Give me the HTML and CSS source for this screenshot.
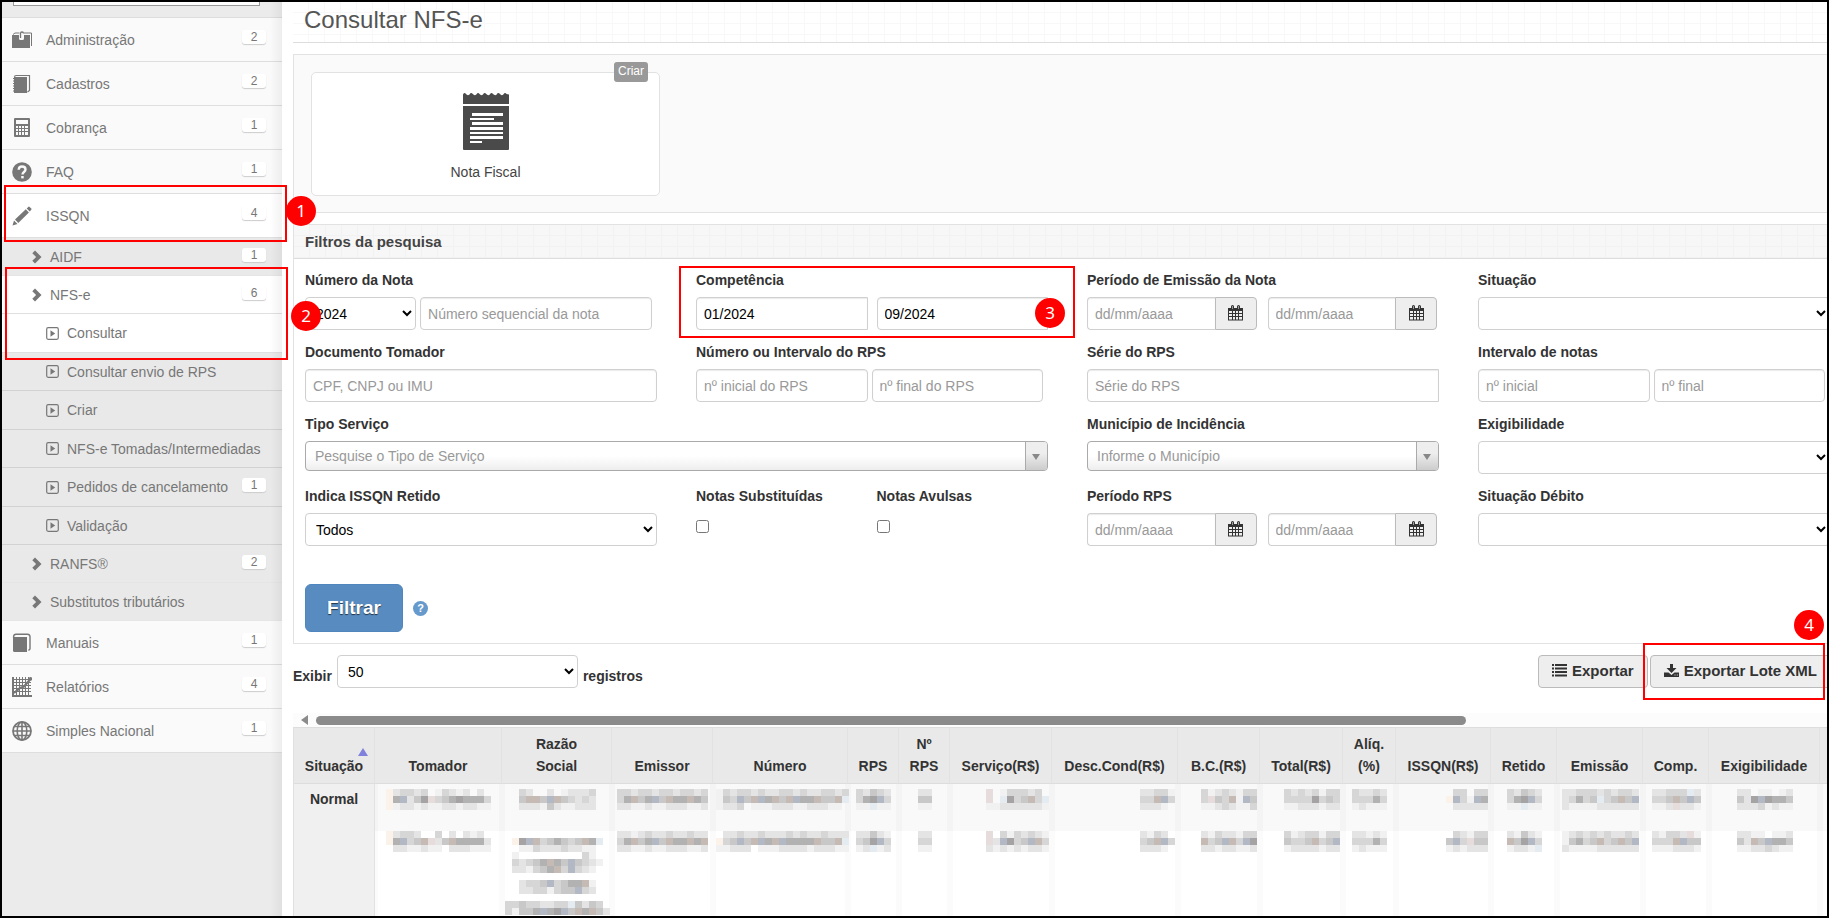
FILE: index.html
```html
<!DOCTYPE html>
<html lang="pt-BR">
<head>
    <meta charset="UTF-8">
    <meta name="viewport" content="width=device-width, initial-scale=1.0">
    <title>Consultar NFS-e</title>
    <link rel="stylesheet" href="styles.css">
</head>
<body>
    <!-- Ícones reutilizados -->
    <svg class="sprite" aria-hidden="true">
        <symbol id="i-chevron" viewBox="0 0 10 14"><path d="M3 0.5L9.500 7L3 13.500L0.300 10.800L4.100 7L0.300 3.200Z" fill="#777"/></symbol>
        <symbol id="i-play" viewBox="0 0 13 13"><rect x="0.700" y="0.700" width="11.600" height="11.600" rx="1.500" fill="none" stroke="#777" stroke-width="1.200"/><path d="M4.500 3.300L9.200 6.500L4.500 9.700Z" fill="#777"/></symbol>
        <symbol id="i-calendar" viewBox="0 0 15 16"><path d="M0 3h3V1.500a1.500 1.500 0 0 1 3 0V3h3V1.500a1.500 1.500 0 0 1 3 0V3h3v12.500H0z" fill="#333"/><path d="M1 6h3v2H1zM5 6h2v2H5zM8 6h2v2H8zM11 6h3v2h-3zM1 9h3v2H1zM5 9h2v2H5zM8 9h2v2H8zM11 9h3v2h-3zM1 12h3v2.500H1zM5 12h2v2.500H5zM8 12h2v2.500H8zM11 12h3v2.500h-3z" fill="#eee"/><path d="M4.500 1v3M10.500 1v3" stroke="#999" stroke-width="1"/></symbol>
    </svg>

    <div class="app">
        <nav class="sidebar">
            <div class="sidebar-search"><input type="text" aria-label="Buscar no menu"></div>
            <ul class="menu">
                <li><a class="item" href="#">
                    <svg class="icon" viewBox="0 0 20 20"><path d="M0 5h7v3.500a1.500 1.500 0 0 0 1.500 1.500h2A1.500 1.500 0 0 0 12 8.500V5h6v13H0z" fill="#777"/><path d="M1 4.500L3 3h4.500M12 3h7.500v13" fill="none" stroke="#777"/><path d="M8.500 8V3.500a1.500 1.500 0 0 1 3 0" fill="none" stroke="#777" stroke-width="1.300"/></svg>
                    <span>Administração</span><b class="count">2</b></a></li>
                <li><a class="item" href="#">
                    <svg class="icon" viewBox="0 0 20 20"><path d="M2 3h13v16H2z" fill="#777"/><path d="M2 2.500L4 1.500h13.500v15L15.500 18" fill="none" stroke="#777" stroke-width="1.200"/><path d="M1 4.500h2M1 7h2M1 9.500h2M1 12h2M1 14.500h2M1 17h2" stroke="#777"/></svg>
                    <span>Cadastros</span><b class="count">2</b></a></li>
                <li><a class="item" href="#">
                    <svg class="icon" viewBox="0 0 20 20"><path fill-rule="evenodd" d="M3 0h14a1 1 0 0 1 1 1v17a1 1 0 0 1-1 1H3a1 1 0 0 1-1-1V1a1 1 0 0 1 1-1zM4 2v4h12V2zM4 8v2h2V8zM7 8v2h2V8zM10 8v2h2V8zM13 8v2h3V8zM4 11v2h2v-2zM7 11v2h2v-2zM10 11v2h2v-2zM13 11v2h3v-2zM4 14v3h2v-3zM7 14v3h2v-3zM10 14v3h2v-3zM13 14v3h3v-3z" fill="#777"/></svg>
                    <span>Cobrança</span><b class="count">1</b></a></li>
                <li><a class="item" href="#">
                    <svg class="icon" viewBox="0 0 20 20"><circle cx="10" cy="10" r="9.800" fill="#777"/><path d="M6.700 7.800C6.800 5.500 8 4.500 10 4.500c2.200 0 3.500 1.300 3.500 3 0 2.500-3 2.500-3 5" fill="none" stroke="#fafafa" stroke-width="2.400"/><rect x="9.200" y="14" width="2.500" height="2.400" fill="#fafafa"/></svg>
                    <span>FAQ</span><b class="count">1</b></a></li>
                <li class="open"><a class="item current" href="#">
                    <svg class="icon" viewBox="0 0 20 20"><path d="M0.500 19.500L2 14.500L5.500 18zM3 13.500L13.800 3.300L16.900 6.400L6.300 17zM14.700 2.500L16.500 0.800Q17 0.400 17.600 0.900L19.300 2.600Q19.800 3.200 19.300 3.800L17.700 5.500z" fill="#777"/></svg>
                    <span>ISSQN</span><b class="count">4</b></a>
                    <ul class="submenu">
                        <li><a class="item second" href="#"><svg class="chevron"><use href="#i-chevron"/></svg><span>AIDF</span><b class="count">1</b></a></li>
                        <li><a class="item second current" href="#"><svg class="chevron"><use href="#i-chevron"/></svg><span>NFS-e</span><b class="count">6</b></a>
                            <ul class="pages">
                                <li><a class="item third current" href="#"><svg class="play"><use href="#i-play"/></svg><span>Consultar</span></a></li>
                                <li><a class="item third" href="#"><svg class="play"><use href="#i-play"/></svg><span>Consultar envio de RPS</span></a></li>
                                <li><a class="item third" href="#"><svg class="play"><use href="#i-play"/></svg><span>Criar</span></a></li>
                                <li><a class="item third" href="#"><svg class="play"><use href="#i-play"/></svg><span>NFS-e Tomadas/Intermediadas</span></a></li>
                                <li><a class="item third" href="#"><svg class="play"><use href="#i-play"/></svg><span>Pedidos de cancelamento</span><b class="count">1</b></a></li>
                                <li><a class="item third" href="#"><svg class="play"><use href="#i-play"/></svg><span>Validação</span></a></li>
                            </ul>
                        </li>
                        <li><a class="item second" href="#"><svg class="chevron"><use href="#i-chevron"/></svg><span>RANFS®</span><b class="count">2</b></a></li>
                        <li><a class="item second" href="#"><svg class="chevron"><use href="#i-chevron"/></svg><span>Substitutos tributários</span></a></li>
                    </ul>
                </li>
                <li><a class="item" href="#">
                    <svg class="icon" viewBox="0 0 20 20"><path d="M1 4h14v15H2.500A1.500 1.500 0 0 1 1 17.500z" fill="#777"/><path d="M1.600 5V3.500A2.500 2.500 0 0 1 4 1.200h11.500A2.500 2.500 0 0 1 18 3.500V16l-1.500 1.500" fill="none" stroke="#777" stroke-width="1.400"/></svg>
                    <span>Manuais</span><b class="count">1</b></a></li>
                <li><a class="item" href="#">
                    <svg class="icon" viewBox="0 0 20 20"><path d="M1 0v19h19" fill="none" stroke="#777" stroke-width="2"/><path d="M4.500 0v18M7.500 0v18M10.500 0v18M13.500 0v18M16.500 0v18M2 2.500h17M2 5.500h17M2 8.500h17M2 11.500h17M2 14.500h17" stroke="#777"/><path d="M2 16L8 11L12 9.500L19 1.500" fill="none" stroke="#777" stroke-width="2.200"/><circle cx="18.500" cy="1.800" r="1.800" fill="#777"/></svg>
                    <span>Relatórios</span><b class="count">4</b></a></li>
                <li><a class="item" href="#">
                    <svg class="icon" viewBox="0 0 20 20"><circle cx="10" cy="10" r="9" fill="none" stroke="#777" stroke-width="1.800"/><ellipse cx="10" cy="10" rx="4.800" ry="9" fill="none" stroke="#777" stroke-width="1.600"/><path d="M10 1v18M1 10h18M2.500 5.500h15M2.500 14.500h15" stroke="#777" stroke-width="1.600"/></svg>
                    <span>Simples Nacional</span><b class="count">1</b></a></li>
            </ul>
        </nav>

        <main class="main">
            <h1 class="page-title">Consultar NFS-e</h1>

            <section class="shortcuts">
                <a class="shortcut" href="#">
                    <span class="tag">Criar</span>
                    <svg class="receipt" viewBox="0 0 46 57"><path d="M0 11V1.500Q1.500-1 3 1Q4.500 3 6.500 1.500Q8-1 9.800 1Q11.500 3 13.300 1.500Q15-1 16.500 1Q18 3 20 1.500Q21.500-1 23.300 1Q25 3 26.800 1.500Q28.500-1 30 1Q32 3 33.700 1.500Q35-1 37 1Q38.500 3 40.300 1.500Q42-1 43.500 1L46 1.500V11zM0 13H46V56Q46 57 45 57H1Q0 57 0 56z" fill="#4a4a4a"/><path d="M9 20h31v3H9zM7 25h24v2H7zM9 29h31v3H9zM7 34h33v3H7zM7 39h33v2H7zM7 43h33v3H7zM7 48h12v2H7z" fill="#fff"/></svg>
                    <span>Nota Fiscal</span>
                </a>
            </section>

            <section class="filters">
                <h2 class="filters-title">Filtros da pesquisa</h2>
                <form class="filters-form">
                    <div class="fields">
                        <div class="field">
                            <label for="numero">Número da Nota</label>
                            <div class="row">
                                <select class="control year" aria-label="Ano da nota"><option>2024</option></select>
                                <input class="control" id="numero" type="text" placeholder="Número sequencial da nota">
                            </div>
                        </div>
                        <div class="field">
                            <label for="competencia">Competência</label>
                            <div class="row halves">
                                <input class="control square" id="competencia" type="text" value="01/2024">
                                <input class="control square" type="text" value="09/2024" aria-label="Competência final">
                            </div>
                        </div>
                        <div class="field">
                            <label for="emissao">Período de Emissão da Nota</label>
                            <div class="row halves">
                                <div class="date"><input class="control" id="emissao" type="text" placeholder="dd/mm/aaaa"><button type="button" aria-label="Abrir calendário"><svg><use href="#i-calendar"/></svg></button></div>
                                <div class="date"><input class="control" type="text" placeholder="dd/mm/aaaa" aria-label="Emissão até"><button type="button" aria-label="Abrir calendário"><svg><use href="#i-calendar"/></svg></button></div>
                            </div>
                        </div>
                        <div class="field">
                            <label for="situacao">Situação</label>
                            <select class="control" id="situacao"><option></option></select>
                        </div>

                        <div class="field">
                            <label for="documento">Documento Tomador</label>
                            <input class="control" id="documento" type="text" placeholder="CPF, CNPJ ou IMU">
                        </div>
                        <div class="field">
                            <label for="rps">Número ou Intervalo do RPS</label>
                            <div class="row">
                                <input class="control" id="rps" type="text" placeholder="nº inicial do RPS">
                                <input class="control" type="text" placeholder="nº final do RPS" aria-label="Número final do RPS">
                            </div>
                        </div>
                        <div class="field">
                            <label for="serie">Série do RPS</label>
                            <input class="control square" id="serie" type="text" placeholder="Série do RPS">
                        </div>
                        <div class="field">
                            <label for="intervalo">Intervalo de notas</label>
                            <div class="row">
                                <input class="control" id="intervalo" type="text" placeholder="nº inicial">
                                <input class="control" type="text" placeholder="nº final" aria-label="Número final">
                            </div>
                        </div>

                        <div class="field wide">
                            <label for="tipo">Tipo Serviço</label>
                            <div class="picker"><select id="tipo"><option>Pesquise o Tipo de Serviço</option></select></div>
                        </div>
                        <div class="field">
                            <label for="municipio">Município de Incidência</label>
                            <div class="picker"><select id="municipio"><option>Informe o Município</option></select></div>
                        </div>
                        <div class="field">
                            <label for="exigibilidade">Exigibilidade</label>
                            <select class="control" id="exigibilidade"><option></option></select>
                        </div>

                        <div class="field">
                            <label for="retido">Indica ISSQN Retido</label>
                            <select class="control" id="retido"><option>Todos</option></select>
                        </div>
                        <div class="halves">
                            <div class="field">
                                <label for="substituidas">Notas Substituídas</label>
                                <input class="check" id="substituidas" type="checkbox">
                            </div>
                            <div class="field">
                                <label for="avulsas">Notas Avulsas</label>
                                <input class="check" id="avulsas" type="checkbox">
                            </div>
                        </div>
                        <div class="field">
                            <label for="periodo-rps">Período RPS</label>
                            <div class="row halves">
                                <div class="date"><input class="control" id="periodo-rps" type="text" placeholder="dd/mm/aaaa"><button type="button" aria-label="Abrir calendário"><svg><use href="#i-calendar"/></svg></button></div>
                                <div class="date"><input class="control" type="text" placeholder="dd/mm/aaaa" aria-label="Período RPS até"><button type="button" aria-label="Abrir calendário"><svg><use href="#i-calendar"/></svg></button></div>
                            </div>
                        </div>
                        <div class="field">
                            <label for="debito">Situação Débito</label>
                            <select class="control" id="debito"><option></option></select>
                        </div>
                    </div>
                    <div class="submit">
                        <button class="btn-filter" type="button">Filtrar</button>
                        <span class="help">?</span>
                    </div>
                </form>
            </section>

            <div class="toolbar">
                <label for="exibir">Exibir</label>
                <select class="control page-size" id="exibir"><option>50</option></select>
                <span class="toolbar-text">registros</span>
                <div class="actions">
                    <button class="btn" type="button"><svg viewBox="0 0 15 13"><path d="M0 0h2v2H0zM3 0h12v2H3zM0 3.500h2v2H0zM3 3.500h12v2H3zM0 7h2v2H0zM3 7h12v2H3zM0 10.500h2v2H0zM3 10.500h12v2H3z" fill="#333"/></svg>Exportar</button>
                    <button class="btn" type="button"><svg viewBox="0 0 15 13"><path d="M6 0h3v4h3.500L7.500 9L2.500 4H6zM0 8.500h4.500L7.500 11l3-2.500H15V13H0z" fill="#333"/><path d="M10.500 11h1M12.800 11h1" stroke="#eee"/></svg>Exportar Lote XML</button>
                </div>
            </div>

            <div class="scrollbar"><i class="arrow-left"></i><i class="thumb"></i></div>

            <table class="results">
                <colgroup>
                    <col class="c-situacao"><col class="c-tomador"><col class="c-razao"><col class="c-emissor"><col class="c-numero"><col class="c-rps"><col class="c-rps"><col class="c-servico"><col class="c-desc"><col class="c-bc"><col class="c-total"><col class="c-aliq"><col class="c-issqn"><col class="c-retido"><col class="c-emissao"><col class="c-retido"><col class="c-exig"><col>
                </colgroup>
                <thead>
                    <tr>
                        <th class="sorted">Situação</th><th>Tomador</th><th>Razão<br>Social</th><th>Emissor</th><th>Número</th><th>RPS</th><th>Nº<br>RPS</th><th>Serviço(R$)</th><th>Desc.Cond(R$)</th><th>B.C.(R$)</th><th>Total(R$)</th><th>Alíq.<br>(%)</th><th>ISSQN(R$)</th><th>Retido</th><th>Emissão</th><th>Comp.</th><th>Exigibilidade</th><th></th>
                    </tr>
                </thead>
                <tbody id="rows"></tbody>
            </table>
        </main>

        <!-- Marcações do passo a passo -->
        <div class="mark mark-1"></div><span class="step step-1">1</span>
        <div class="mark mark-2"></div><span class="step step-2">2</span>
        <div class="mark mark-3"></div><span class="step step-3">3</span>
        <div class="mark mark-4"></div><span class="step step-4">4</span>
    </div>
    <script src="script.js"></script>
</body>
</html>
```
FILE: styles.css
```css
* {
    box-sizing: border-box;
}

body {
    margin: 0;
    font-family: Arial, "Liberation Sans", sans-serif;
    font-size: 14px;
    line-height: 20px;
    color: #333;
    background: #fff;
}

ul {
    list-style: none;
    margin: 0;
    padding: 0;
}

a {
    color: inherit;
    text-decoration: none;
}

input, select, button {
    font-family: inherit;
    font-size: 14px;
}

.sprite {
    display: none;
}

.app {
    position: relative;
    display: flex;
    height: 100vh;
    border: 2px solid #000;
    overflow: hidden;
}

/* Menu lateral */
.sidebar {
    position: relative;
    flex: 0 0 280px;
    background: #ebebeb;
    color: #777;
}

.sidebar::after {
    content: "";
    position: absolute;
    top: 0;
    right: 0;
    bottom: 0;
    width: 12px;
    background: linear-gradient(to right, rgba(0,0,0,0), rgba(0,0,0,0.05));
    pointer-events: none;
}

.sidebar-search {
    height: 16px;
    padding: 0 22px 0 11px;
    border-bottom: 1px solid #ddd;
    display: flex;
    align-items: flex-start;
}

.sidebar-search input {
    width: 100%;
    height: 4px;
    padding: 0;
    border: 1px solid #999;
    border-top: 0;
    background: #fff;
}

.item {
    display: flex;
    align-items: center;
    height: 44px;
    padding: 0 16px 0 10px;
    background: #fafafa;
    border-bottom: 1px solid #dedede;
}

.item span {
    flex: 1;
    white-space: nowrap;
}

.icon {
    width: 20px;
    height: 20px;
    margin-right: 14px;
    flex: none;
}

.count {
    width: 24px;
    height: 14px;
    margin-bottom: 6px;
    border-radius: 3px;
    background: #fff;
    box-shadow: 0 1px 1px #ccc;
    font-size: 12px;
    font-weight: normal;
    line-height: 14px;
    text-align: center;
    flex: none;
}

.second {
    height: 38px;
    padding-left: 30px;
    background: #e9e9e9;
    border-bottom-color: #e5e5e5;
}

.third {
    height: 39px;
    padding-left: 44px;
    background: #e9e9e9;
    border-bottom-color: #d2d2d2;
}

.pages li:nth-child(even) .third {
    height: 38px;
}

.second .count, .third .count {
    margin-bottom: 4px;
}

.chevron {
    width: 10px;
    height: 14px;
    margin-right: 8px;
}

.play {
    width: 13px;
    height: 13px;
    margin-right: 8px;
}

.item.current {
    background: #fff;
    border-bottom-color: #e0e0e0;
}

/* Conteúdo */
.main {
    flex: 1;
    min-width: 0;
    padding-left: 11px;
    margin-right: -15px;
}

.page-title {
    height: 41px;
    margin: 0 0 11px;
    padding: 0 11px;
    border-bottom: 1px solid #ddd;
    background: repeating-linear-gradient(to right, transparent 0 15px, #f8f8f8 15px 16px), repeating-linear-gradient(#fff 0 10px, #f8f8f8 10px 11px);
    font-size: 24px;
    font-weight: normal;
    line-height: 36px;
    color: #555;
}

.shortcuts {
    padding: 17px 17px 16px;
    border: 1px solid #e2e2e2;
    background: #fafafa;
}

.shortcut {
    position: relative;
    display: flex;
    flex-direction: column;
    align-items: center;
    gap: 12px;
    width: 349px;
    height: 124px;
    padding-top: 20px;
    border: 1px solid #e2e2e2;
    border-radius: 5px;
    background: #fff;
    color: #444;
}

.receipt {
    width: 46px;
    height: 57px;
}

.tag {
    position: absolute;
    top: -11px;
    right: 11px;
    padding: 0 4px 2px;
    border-radius: 3px;
    background: #999;
    color: #fff;
    font-size: 12px;
    line-height: 18px;
}

.filters {
    margin-top: 11px;
    border: 1px solid #e2e2e2;
}

.filters-title {
    margin: 0;
    padding: 0 11px;
    border-bottom: 1px solid #ddd;
    background: repeating-linear-gradient(to right, transparent 0 15px, #f2f2f2 15px 16px), repeating-linear-gradient(#f7f7f7 0 10px, #f2f2f2 10px 11px);
    font-size: 15px;
    line-height: 33px;
    color: #444;
}

.filters-form {
    padding: 11px;
}

.fields {
    display: grid;
    grid-template-columns: repeat(4, 1fr);
    gap: 12px 39px;
}

.wide {
    grid-column: span 2;
}

label, .toolbar-text {
    display: block;
    font-weight: bold;
}

.field label {
    margin-bottom: 7px;
    white-space: nowrap;
}

.row {
    display: flex;
    gap: 4px;
    padding-right: 5px;
}

.halves {
    display: grid;
    grid-template-columns: 1fr 1fr;
    gap: 9px;
    padding-right: 0;
}

.control {
    display: block;
    width: 100%;
    min-width: 0;
    height: 33px;
    padding: 0 7px;
    border: 1px solid #d0d0d0;
    border-radius: 4px;
    background-color: #fff;
    color: #000;
}

input.control {
    box-shadow: inset 0 1px 1px rgba(0,0,0,0.08);
}

select.control {
    padding: 0 6px;
}

::placeholder {
    color: #999;
}

.square {
    border-radius: 4px 0 0 4px;
}

.year {
    flex: none;
    width: 32%;
}

.date {
    display: flex;
    margin-right: 2px;
}

.date .control {
    border-right: 0;
    border-radius: 4px 0 0 4px;
}

.date button {
    flex: 0 0 42px;
    padding: 0;
    border: 1px solid #bbb;
    border-radius: 0 4px 4px 0;
    background: #eee;
}

.date svg {
    display: block;
    width: 15px;
    height: 16px;
    margin: 0 auto 2px;
}

.picker {
    position: relative;
}

.picker select {
    appearance: none;
    display: block;
    width: 100%;
    height: 30px;
    padding: 0 30px 0 9px;
    border: 1px solid #aaa;
    border-radius: 4px;
    background: linear-gradient(#fff 50%, #eee);
    color: #999;
}

.picker::before {
    content: "";
    position: absolute;
    top: 1px;
    right: 1px;
    width: 21px;
    height: 28px;
    border-left: 1px solid #aaa;
    border-radius: 0 3px 3px 0;
    background: linear-gradient(#eee 40%, #ccc);
    pointer-events: none;
}

.picker::after {
    content: "";
    position: absolute;
    top: 13px;
    right: 8px;
    border: 4px solid transparent;
    border-top: 6px solid #888;
    border-bottom: 0;
    pointer-events: none;
}

.check {
    display: block;
    width: 13px;
    height: 13px;
    margin: 14px 0 0;
}

.submit {
    display: flex;
    align-items: center;
    gap: 10px;
    margin-top: 38px;
}

.btn-filter {
    width: 98px;
    height: 48px;
    border: 1px solid #4f86bd;
    border-radius: 6px;
    background: #588cc1;
    color: #fff;
    font-size: 19px;
    font-weight: bold;
    text-shadow: 0 1px 1px #234;
}

.help {
    width: 15px;
    height: 15px;
    border-radius: 50%;
    background: #6699cc;
    color: #fff;
    font-size: 11px;
    font-weight: bold;
    line-height: 15px;
    text-align: center;
}

.toolbar {
    display: flex;
    align-items: flex-end;
    gap: 5px;
    margin-top: 11px;
}

.toolbar label, .toolbar-text {
    padding-bottom: 2px;
}

.page-size {
    width: 241px;
}

.actions {
    display: flex;
    gap: 2px;
    margin-left: auto;
    padding-right: 11px;
}

.btn {
    display: flex;
    align-items: center;
    gap: 5px;
    height: 33px;
    padding: 0 13px 2px;
    border: 1px solid #bbb;
    border-radius: 4px;
    background: #eee;
    color: #333;
    font-size: 15px;
    font-weight: bold;
    white-space: nowrap;
}

.btn svg {
    width: 15px;
    height: 13px;
}

.scrollbar {
    display: flex;
    align-items: center;
    height: 14px;
    margin-top: 25px;
    padding: 0 8px;
    background: #fcfcfc;
}

.arrow-left {
    border: 5px solid transparent;
    border-right: 7px solid #8b8b8b;
    border-left: 0;
    margin-right: 8px;
}

.thumb {
    width: 75%;
    height: 9px;
    border-radius: 5px;
    background: #8b8b8b;
}

/* Resultados */
.results {
    width: 100%;
    table-layout: fixed;
    border-collapse: separate;
    border-spacing: 0;
    border-left: 1px solid #e0e0e0;
}

.results th {
    padding: 5px 0 6px;
    border-top: 1px solid #ddd;
    border-right: 1px solid #e2e2e2;
    border-bottom: 1px solid #ddd;
    background: #e9e9e9;
    line-height: 22px;
    vertical-align: bottom;
    white-space: nowrap;
}

.results .sorted {
    position: relative;
}

.sorted::after {
    content: "";
    position: absolute;
    top: 20px;
    right: 6px;
    border: 5px solid transparent;
    border-bottom: 8px solid #8080dd;
    border-top: 0;
}

.results td {
    height: 47px;
    padding: 5px 0 0;
    border-right: 3px solid #f4f4f4;
    border-left: 3px solid #f4f4f4;
    background: #f9f9f9;
    text-align: center;
    vertical-align: top;
}

.results tr + tr td {
    height: 100px;
    padding-top: 0;
    border-color: #fbfbfb;
    background: #fff;
}

.results td.num {
    text-align: right;
}

.results tbody th {
    padding-top: 4px;
    border-top: 0;
    background: #f0f0f0;
    vertical-align: top;
}

.results svg {
    display: inline-block;
    vertical-align: top;
}

.c-situacao { width: 81px; }
.c-tomador { width: 127px; }
.c-razao { width: 110px; }
.c-emissor { width: 101px; }
.c-numero { width: 135px; }
.c-rps { width: 51px; }
.c-servico { width: 102px; }
.c-desc { width: 126px; }
.c-bc { width: 82px; }
.c-total { width: 83px; }
.c-aliq { width: 53px; }
.c-issqn { width: 95px; }
.c-retido { width: 66px; }
.c-emissao { width: 86px; }
.c-exig { width: 111px; }

/* Marcações */
.mark {
    position: absolute;
    border: 2px solid #f00;
    pointer-events: none;
}

.step {
    position: absolute;
    width: 30px;
    height: 30px;
    border-radius: 50%;
    background: #f00;
    color: #fff;
    font-family: "Noto Sans", sans-serif;
    font-size: 17px;
    line-height: 29px;
    text-align: center;
}

.mark-1 { left: 2px; top: 183px; width: 283px; height: 57px; }
.mark-2 { left: 3px; top: 265px; width: 283px; height: 93px; }
.mark-3 { left: 677px; top: 264px; width: 396px; height: 72px; }
.mark-4 { left: 1641px; top: 641px; width: 182px; height: 57px; }
.step-1 { left: 284px; top: 194px; }
.step-2 { left: 289px; top: 299px; }
.step-3 { left: 1033px; top: 296px; }
.step-4 { left: 1792px; top: 608px; }
```
FILE: script.js
```js
// Valores protegidos: cada caractere é um quadrado de 7px
const SIZE = 7;
const colors = {
    1: '#f1f1f1', 2: '#e4e4e4', 3: '#d6d6d6', 4: '#c8c8c8', 5: '#b2b2b2', 6: '#a6a3a4',
    b: '#b2b8c4', n: '#c6bab5', s: '#e4ecf2', y: '#fbf3ea', p: '#e6dcdb'
};

const rows = [
    [
        ['y23323013212020', 'y5b246p34565553', 'y12212112212211'],
        ['32002012223', '4nn4bn43232', '22214211222'],
        ['3323323323323', '35n45b4n55n54', '2211211222112'],
        ['1323323223323223323', '143b4nb5n4nb55n44ns', '1223011122211222110'],
        ['32432', '356b3', '11s11'],
        ['22', '44', '11'],
        ['p01333230', 'p0s634n3s', '112222221'],
        ['22331', '33nb3', '22210'],
        ['31232133', '3p43n1b4', '11232113'],
        ['32323133', '33336343', '11222122'],
        ['32232', '33353', '12111'],
        ['033033', 'yb31b5', '022222'],
        ['32432', '356b3', '11s11'],
        ['22333232332', '23534s34n4b', '21111222222'],
        ['22333s2', '334n4b4', '112p221'],
        ['22011012', '426b6554', '22231211']
    ],
    [
        ['y23320030202120', 'y5b34np24n55552', '022112110222111'],
        ['000000000000000', '0y6bn345434n5s0', '001132223221100', '010000000003100', '032345n54b43210', '0221345n3b32100', '000000000000000', '002334b3455n100', '0022331344b3200', '000000000000000', '334332233s42430', '31445b56b4n5n42'],
        ['2212322322322', '35n45b4n55n5n', '2211211222112'],
        ['0223223222323223222', 'y34b4nb5nb5555n44ns', '1122201112222122211'],
        ['22421', '346b3', '12s12'],
        ['22', '33', '11'],
        ['p03132321', 'p2b634bn3', '212121221'],
        ['21320', '34nb3', '22210'],
        ['21322133', 'n34bn3b6', '22122112'],
        ['31233133', '4334n34b', '12222122'],
        ['22121', '33353', '12111'],
        ['032133', '4b3p44', '121222'],
        ['21421', 'n46b3', '1221s'],
        ['12323232232', '14534n34n4b', '21111222222'],
        ['21332p1', '333nb44', '1112221'],
        ['22110112', '42n4b554', '11223211']
    ]
];

// Colunas com valores alinhados à direita
const numeric = [6, 7, 8, 9, 11];

function mosaic(lines) {
    const width = lines[0].length * SIZE;
    let rects = '';
    lines.forEach((line, y) => {
        [...line].forEach((key, x) => {
            if (colors[key]) {
                rects += `<rect x="${x * SIZE}" y="${y * SIZE}" width="${SIZE}" height="${SIZE}" fill="${colors[key]}"/>`;
            }
        });
    });
    return `<svg width="${width}" height="${lines.length * SIZE}" shape-rendering="crispEdges" aria-hidden="true">${rects}</svg>`;
}

const tbody = document.getElementById('rows');

rows.forEach((row, index) => {
    const tr = document.createElement('tr');
    tr.innerHTML = (index === 0 ? '<th rowspan="2">Normal</th>' : '') +
        row.map((lines, i) => `<td class="${numeric.includes(i) ? 'num' : ''}">${mosaic(lines)}</td>`).join('') +
        '<td></td>';
    tbody.appendChild(tr);
});
```
